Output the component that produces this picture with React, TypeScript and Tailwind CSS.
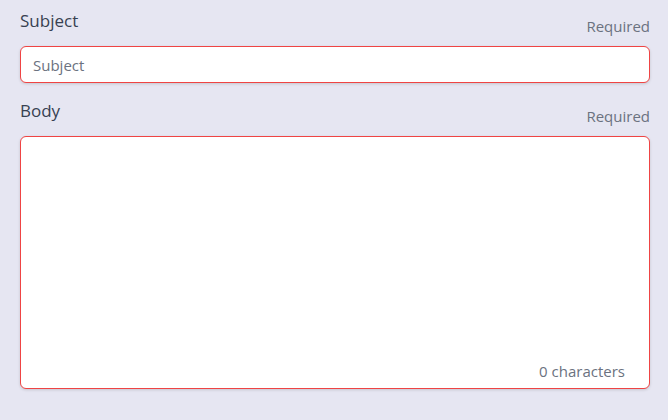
import { useState } from 'react'

export default function App() {
  const [subject, setSubject] = useState('')
  const [body, setBody] = useState('')

  return (
    <div className="min-h-[420px] w-full bg-[#e6e6f2] pl-5 pr-[18px] pt-[9px] font-['Open_Sans',sans-serif]">
      <div className="mb-[10px] flex items-start justify-between">
        <label className="text-[17px] leading-6 text-[#374151]">Subject</label>
        <span className="mt-[7px] text-[15px] leading-5 text-[#6b7280]">Required</span>
      </div>
      <input
        value={subject}
        onChange={e => setSubject(e.target.value)}
        placeholder="Subject"
        className="h-[37px] w-full rounded-md border border-[#ef4444] bg-white px-3 text-[15px] text-[#374151] placeholder-[#6b7280] shadow-[0_1px_3px_rgba(0,0,0,0.15)] outline-none"
      />

      <div className="mb-[10px] mt-4 flex items-start justify-between">
        <label className="text-[17px] leading-6 text-[#374151]">Body</label>
        <span className="mt-[7px] text-[15px] leading-5 text-[#6b7280]">Required</span>
      </div>
      <div className="relative">
        <textarea
          value={body}
          onChange={e => setBody(e.target.value)}
          className="block h-[253px] w-full resize-none rounded-md border border-[#ef4444] bg-white px-3 py-2 text-[15px] text-[#374151] shadow-[0_1px_3px_rgba(0,0,0,0.15)] outline-none"
        />
        <span className="absolute bottom-2 right-[25px] text-[15px] leading-5 text-[#6b7280]">
          {body.length} characters
        </span>
      </div>
    </div>
  )
}
